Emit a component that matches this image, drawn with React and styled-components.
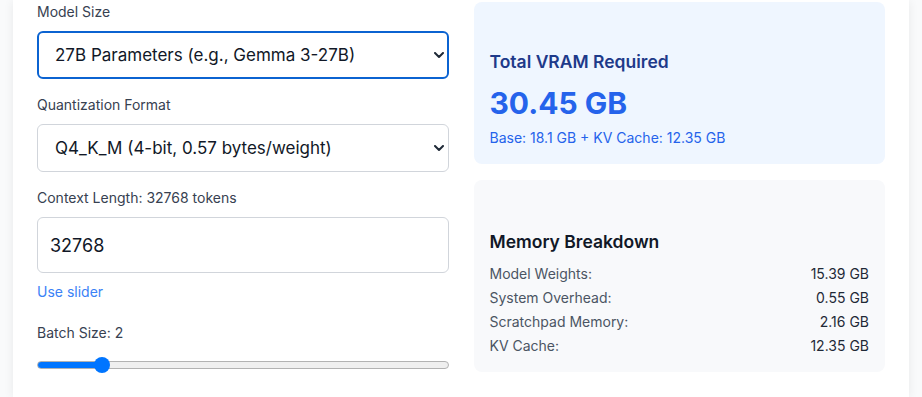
import React, { useState } from "react";
import styled, { createGlobalStyle } from "styled-components";

const GlobalStyle = createGlobalStyle`
  * { box-sizing: border-box; }
  body {
    margin: 0;
    background: #f9fafb;
    font-family: Inter, "Noto Sans", Arial, sans-serif;
    color: #111827;
    overflow: hidden;
  }
`;

const Page = styled.div`
  padding: 0 13px;
`;

const Card = styled.div`
  background: #ffffff;
  box-shadow: 0 1px 10px rgba(0, 0, 0, 0.07);
  padding: 2px 24px 24px;
  display: grid;
  grid-template-columns: 1fr 1fr;
  column-gap: 25px;
`;

const Column = styled.div`
  display: flex;
  flex-direction: column;
`;

const Field = styled.div`
  display: flex;
  flex-direction: column;
  margin-top: ${props => props.spacing || 0}px;
`;

const Label = styled.label`
  font-size: 14px;
  line-height: 20px;
  color: #374151;
  margin-bottom: 9px;
`;

const SelectWrap = styled.div`
  position: relative;
`;

const Select = styled.select`
  appearance: none;
  -webkit-appearance: none;
  width: 100%;
  height: 48px;
  padding: 0 36px 0 ${props => (props.focused ? 16 : 17)}px;
  font-family: inherit;
  font-size: 17px;
  color: #111827;
  background: #ffffff;
  border: ${props => (props.focused ? "2px solid #0b63d1" : "1px solid #d1d5db")};
  border-radius: 6px;
  outline: none;
`;

const Chevron = styled.svg`
  position: absolute;
  right: 5px;
  top: 50%;
  margin-top: -3px;
  pointer-events: none;
`;

const TextInput = styled.input`
  width: 100%;
  height: 56px;
  padding: 0 12px;
  font-family: inherit;
  font-size: 18px;
  color: #111827;
  border: 1px solid #d1d5db;
  border-radius: 6px;
  outline: none;
`;

const LinkButton = styled.button`
  align-self: flex-start;
  background: none;
  border: none;
  padding: 0;
  margin-top: 9px;
  font-family: inherit;
  font-size: 14px;
  line-height: 20px;
  color: #3b82f6;
  cursor: pointer;
`;

const Range = styled.input`
  -webkit-appearance: none;
  appearance: none;
  width: 100%;
  height: 16px;
  margin: 5px 0 0;
  background: transparent;

  &::-webkit-slider-runnable-track {
    height: 8px;
    border-radius: 4px;
    border: 1px solid #b2b2b2;
    background: linear-gradient(
      to right,
      #0075ff 0,
      #0075ff ${props => props.fill}%,
      #efefef ${props => props.fill}%,
      #efefef 100%
    );
  }
  &::-webkit-slider-thumb {
    -webkit-appearance: none;
    width: 16px;
    height: 16px;
    margin-top: -5px;
    border-radius: 50%;
    background: #0075ff;
    border: none;
  }
`;

const Panel = styled.div`
  display: flex;
  flex-direction: column;
  justify-content: flex-end;
  height: ${props => props.height}px;
  padding: 16px;
  border-radius: 8px;
  background: ${props => (props.tone === "blue" ? "#eff6ff" : "#f8f9fb")};
  margin-bottom: ${props => props.gap || 0}px;
`;

const PanelTitle = styled.h3`
  margin: 0 0 ${props => props.space}px;
  font-size: 17.5px;
  line-height: 28px;
  font-weight: 600;
  color: ${props => props.color};
`;

const BigValue = styled.div`
  font-size: 30px;
  line-height: 36px;
  font-weight: 700;
  color: #2563eb;
  margin-bottom: 7px;
`;

const SubText = styled.div`
  font-size: 14px;
  line-height: 20px;
  color: #2563eb;
`;

const Rows = styled.div`
  display: flex;
  flex-direction: column;
  gap: 4px;
`;

const Row = styled.div`
  display: flex;
  justify-content: space-between;
  font-size: 14px;
  line-height: 20px;
`;

const RowLabel = styled.span`
  color: #4b5563;
`;

const RowValue = styled.span`
  color: #1f2937;
`;

const ChevronIcon = () => (
  <Chevron width="10" height="7" viewBox="0 0 10 7">
    <polyline points="1,1 5,5 9,1" fill="none" stroke="#1f2937" strokeWidth="2" strokeLinecap="round" strokeLinejoin="round" />
  </Chevron>
);

const breakdown = [
  ["Model Weights:", "15.39 GB"],
  ["System Overhead:", "0.55 GB"],
  ["Scratchpad Memory:", "2.16 GB"],
  ["KV Cache:", "12.35 GB"]
];

export default function App() {
  const [batch, setBatch] = useState(2);
  const [context, setContext] = useState("32768");
  const min = 1;
  const max = 8;
  const fill = ((batch - min) / (max - min)) * 100;

  return (
    <>
      <GlobalStyle />
      <Page>
        <Card>
          <Column>
            <Field>
              <Label>Model Size</Label>
              <SelectWrap>
                <Select focused defaultValue="27b">
                  <option value="27b">27B Parameters (e.g., Gemma 3-27B)</option>
                </Select>
                <ChevronIcon />
              </SelectWrap>
            </Field>
            <Field spacing={16}>
              <Label>Quantization Format</Label>
              <SelectWrap>
                <Select defaultValue="q4km">
                  <option value="q4km">Q4_K_M (4-bit, 0.57 bytes/weight)</option>
                </Select>
                <ChevronIcon />
              </SelectWrap>
            </Field>
            <Field spacing={16}>
              <Label>Context Length: {context} tokens</Label>
              <TextInput value={context} onChange={e => setContext(e.target.value)} />
              <LinkButton>Use slider</LinkButton>
            </Field>
            <Field spacing={21}>
              <Label>Batch Size: {batch}</Label>
              <Range
                type="range"
                min={min}
                max={max}
                value={batch}
                fill={fill}
                onChange={e => setBatch(Number(e.target.value))}
              />
            </Field>
          </Column>
          <Column>
            <Panel tone="blue" height={162} gap={16}>
              <PanelTitle color="#1e3a8a" space={9}>Total VRAM Required</PanelTitle>
              <BigValue>30.45 GB</BigValue>
              <SubText>Base: 18.1 GB + KV Cache: 12.35 GB</SubText>
            </Panel>
            <Panel height={192}>
              <PanelTitle color="#111827" space={8}>Memory Breakdown</PanelTitle>
              <Rows>
                {breakdown.map(([label, value]) => (
                  <Row key={label}>
                    <RowLabel>{label}</RowLabel>
                    <RowValue>{value}</RowValue>
                  </Row>
                ))}
              </Rows>
            </Panel>
          </Column>
        </Card>
      </Page>
    </>
  );
}
